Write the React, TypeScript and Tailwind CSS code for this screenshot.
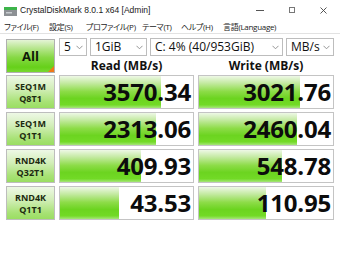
import React from "react";

interface Row {
    top: string;
    bottom: string;
    read: string;
    readPct: number;
    write: string;
    writePct: number;
}

const rows: Row[] = [
    { top: "SEQ1M", bottom: "Q8T1", read: "3570.34", readPct: 76, write: "3021.76", writePct: 75 },
    { top: "SEQ1M", bottom: "Q1T1", read: "2313.06", readPct: 72, write: "2460.04", writePct: 73 },
    { top: "RND4K", bottom: "Q32T1", read: "409.93", readPct: 61, write: "548.78", writePct: 62 },
    { top: "RND4K", bottom: "Q1T1", read: "43.53", readPct: 44, write: "110.95", writePct: 50 },
];

// menu items with the width each takes up in the bar
const menu: { label: string; w: string }[] = [
    { label: "ファイル(F)", w: "w-[45px]" },
    { label: "設定(S)", w: "w-[37px]" },
    { label: "プロファイル(P)", w: "w-[56px]" },
    { label: "テーマ(T)", w: "w-[39px]" },
    { label: "ヘルプ(H)", w: "w-[42px]" },
    { label: "言語(Language)", w: "w-[70px]" },
];

const font = { fontFamily: '"Open Sans", "Noto Sans CJK JP", sans-serif' };

const barGradient =
    "bg-[linear-gradient(to_bottom,#eef8e6_0%,#c4eaa2_22%,#8ddc48_48%,#6cd420_70%,#72da26_90%,#a6e67a_100%)]";

const Select = ({ label, width }: { label: string; width: string }) => (
    <div className={`${width} h-[18px] bg-white border border-[#bdbdbd] flex items-center justify-between pl-[4px] pr-[3px]`}>
        <span className="text-[12px] leading-none text-[#111] whitespace-nowrap">{label}</span>
        <svg width="7" height="5" viewBox="0 0 7 5" className="mt-[1px] shrink-0">
            <path d="M0.5 0.8 L3.5 3.8 L6.5 0.8" fill="none" stroke="#8a8a8a" strokeWidth="0.9" />
        </svg>
    </div>
);

const Meter = ({ value, pct, width }: { value: string; pct: number; width: string }) => (
    <div className={`relative ${width} h-[34px] bg-white border border-[#c4c4c4] overflow-hidden`}>
        <div className={`absolute left-0 top-0 bottom-0 ${barGradient}`} style={{ width: `${pct}%` }} />
        <div className="relative h-full flex items-center justify-end pr-[2px]">
            <span className="text-[24px] font-bold leading-none text-[#0c0c0c] tracking-[-0.2px]">{value}</span>
        </div>
    </div>
);

export default function App() {
    return (
        <div className="w-[340px] h-[275px] bg-white overflow-hidden" style={font}>
            {/* title bar */}
            <div className="h-[20px] flex items-center">
                <svg width="13" height="9" viewBox="0 0 13 9" className="ml-[4px] mt-[3px] shrink-0">
                    <rect x="0" y="0" width="13" height="3" fill="#3cb44a" />
                    <rect x="0" y="3" width="13" height="6" fill="#8c9094" />
                    <rect x="2" y="5" width="6" height="1.5" fill="#c8ccd0" />
                </svg>
                <span className="ml-[3px] mt-[1px] text-[8.5px] font-['Liberation_Sans',sans-serif] text-[#1a1a1a] leading-none whitespace-nowrap">
                    CrystalDiskMark 8.0.1 x64 [Admin]
                </span>
                <div className="ml-auto flex items-center h-full">
                    <div className="w-[32px] flex justify-center">
                        <div className="w-[8px] h-px bg-[#555]" />
                    </div>
                    <div className="w-[32px] flex justify-center">
                        <div className="w-[6px] h-[6px] border border-[#777]" />
                    </div>
                    <div className="w-[32px] flex justify-center pr-[2px]">
                        <svg width="7" height="7" viewBox="0 0 7 7">
                            <path d="M0.5 0.5 L6.5 6.5 M6.5 0.5 L0.5 6.5" stroke="#444" strokeWidth="0.9" />
                        </svg>
                    </div>
                </div>
            </div>

            {/* menu */}
            <div className="h-[14px] flex items-center pl-[4px] border-b border-[#e2e2e2] text-[8px] tracking-[-0.3px] text-[#222] leading-none whitespace-nowrap [font-feature-settings:'palt']">
                {menu.map((m) => (
                    <span key={m.label} className={`${m.w} shrink-0`}>
                        {m.label}
                    </span>
                ))}
            </div>

            <div className="px-[6px] pt-[4px]">
                <div className="flex gap-[4px]">
                    <div className="relative w-[49px] h-[34px] mt-[1px] border border-[#b0b0b0] bg-[linear-gradient(to_bottom,#e4f4d6_0%,#b8e690_25%,#86d844_55%,#66d01a_85%,#78d830_100%)] flex items-center justify-center">
                        <span className="text-[13px] font-bold text-[#101a08] leading-none">All</span>
                        <div className="absolute right-0 bottom-0 w-0 h-0 border-l-[6px] border-l-transparent border-b-[6px] border-b-[#f07818]" />
                    </div>
                    <div className="flex flex-col">
                        <div className="flex gap-[3px]">
                            <Select label="5" width="w-[28px]" />
                            <Select label="1GiB" width="w-[57px]" />
                            <Select label="C: 4% (40/953GiB)" width="w-[133px]" />
                            <Select label="MB/s" width="w-[48px]" />
                        </div>
                        <div className="flex gap-[4px] h-[17px] items-end">
                            <div className="w-[135px] text-center text-[12px] font-bold text-[#111] leading-none pb-[1px]">Read (MB/s)</div>
                            <div className="w-[136px] text-center text-[12px] font-bold text-[#111] leading-none pb-[1px]">Write (MB/s)</div>
                        </div>
                    </div>
                </div>

                <div className="mt-[2px] flex flex-col gap-[3px]">
                    {rows.map((r, i) => (
                        <div key={i} className="flex gap-[4px]">
                            <div className="w-[49px] h-[34px] border border-[#bdbdbd] bg-[linear-gradient(to_bottom,#eef8e6_0%,#d2eeb8_40%,#a8e276_80%,#9ade62_100%)] flex flex-col items-center justify-center gap-[3px]">
                                <span className="text-[9px] font-bold leading-none text-[#1c2a10]">{r.top}</span>
                                <span className="text-[9px] font-bold leading-none text-[#1c2a10]">{r.bottom}</span>
                            </div>
                            <Meter value={r.read} pct={r.readPct} width="w-[135px]" />
                            <Meter value={r.write} pct={r.writePct} width="w-[136px]" />
                        </div>
                    ))}
                </div>
            </div>
        </div>
    );
}
